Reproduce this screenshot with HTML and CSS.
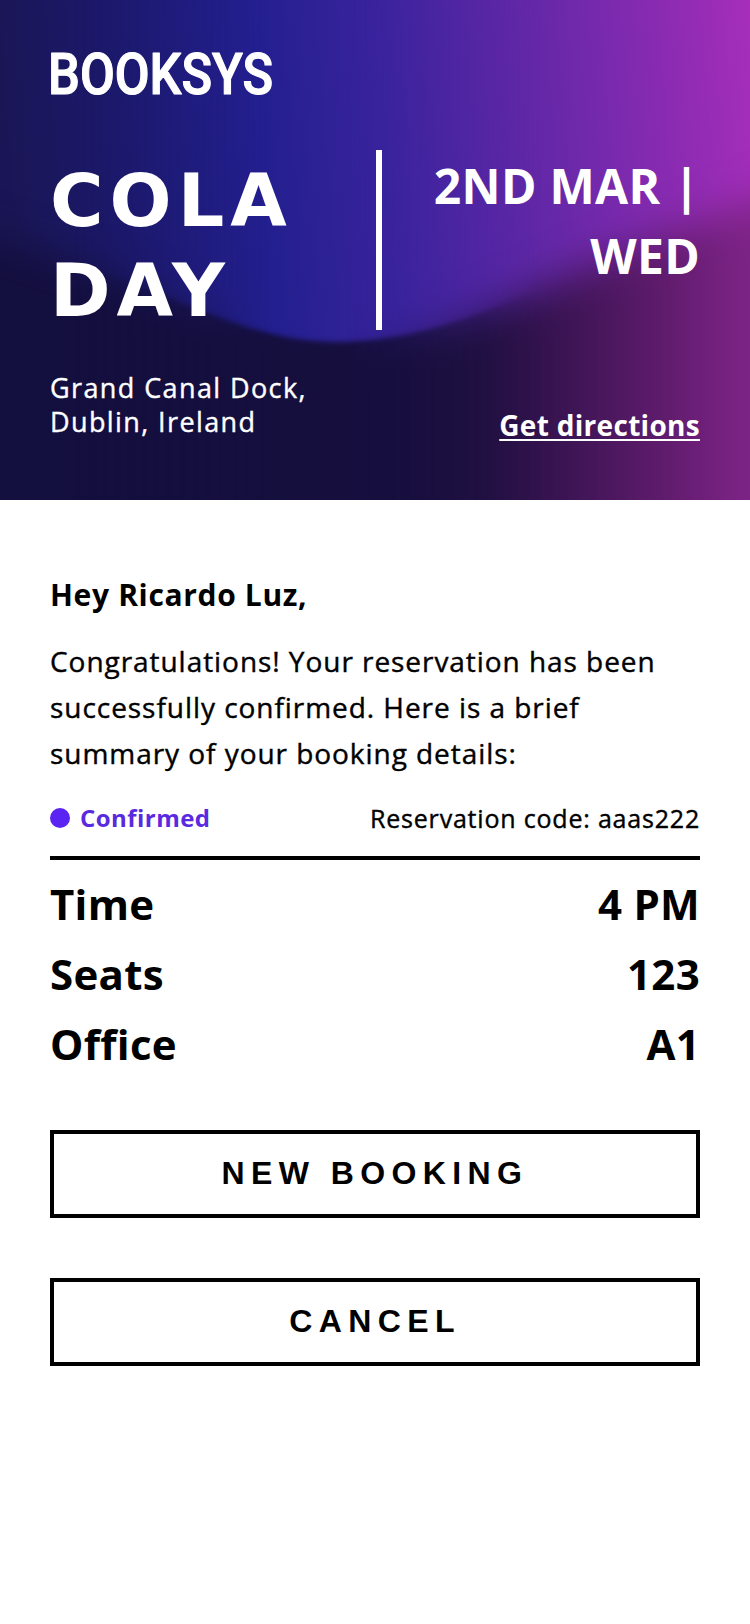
FILE: index.html
```
<!DOCTYPE html>
<html lang="en">
<head>
<meta charset="utf-8">
<title>Booksys – Reservation confirmed</title>
<link rel="stylesheet" href="styles.css">
</head>
<body>
<header class="hero">
  <svg class="hero-art" viewBox="0 0 750 500" preserveAspectRatio="none" aria-hidden="true">
    <defs>
      <linearGradient id="sky" gradientUnits="userSpaceOnUse" x1="0" y1="60" x2="750" y2="0">
        <stop offset="0" stop-color="#1a1656"/>
        <stop offset=".15" stop-color="#1c196c"/>
        <stop offset=".34" stop-color="#231f8f"/>
        <stop offset=".5" stop-color="#39239d"/>
        <stop offset=".72" stop-color="#6628a8"/>
        <stop offset=".88" stop-color="#8a2bb2"/>
        <stop offset="1" stop-color="#a62eba"/>
      </linearGradient>
      <linearGradient id="ground" gradientUnits="userSpaceOnUse" x1="0" y1="0" x2="750" y2="0">
        <stop offset="0" stop-color="#130f3e"/>
        <stop offset=".52" stop-color="#160f3e"/>
        <stop offset=".64" stop-color="#1f1040"/>
        <stop offset=".73" stop-color="#35134f"/>
        <stop offset=".88" stop-color="#5e1b6b"/>
        <stop offset="1" stop-color="#7f2488"/>
      </linearGradient>
      <linearGradient id="focus" gradientUnits="userSpaceOnUse" x1="0" y1="0" x2="750" y2="0">
        <stop offset=".1" stop-color="#000"/>
        <stop offset=".36" stop-color="#fff"/>
        <stop offset=".46" stop-color="#fff"/>
        <stop offset=".72" stop-color="#000"/>
      </linearGradient>
      <mask id="focusMask" maskUnits="userSpaceOnUse" x="0" y="0" width="750" height="500">
        <rect width="750" height="500" fill="url(#focus)"/>
      </mask>
      <filter id="soft" color-interpolation-filters="sRGB" filterUnits="userSpaceOnUse" x="-100" y="-100" width="950" height="800"><feGaussianBlur stdDeviation="20"/></filter>
      <filter id="crisp" color-interpolation-filters="sRGB" filterUnits="userSpaceOnUse" x="-100" y="-100" width="950" height="800"><feGaussianBlur stdDeviation="2.5"/></filter>
      <path id="hill" d="M-100 210 C0 242 60 260 130 283 C210 312 265 342 335 342 C430 342 510 302 590 266 C650 240 700 222 850 165 V700 H-100Z"/>
    </defs>
    <rect width="750" height="500" fill="url(#sky)"/>
    <use href="#hill" fill="url(#ground)" filter="url(#soft)"/>
    <g mask="url(#focusMask)">
      <rect width="750" height="500" fill="url(#sky)"/>
      <use href="#hill" fill="url(#ground)" filter="url(#crisp)"/>
    </g>
  </svg>
  <div class="hero-body">
    <svg class="logo" viewBox="0 0 224 50" role="img" aria-label="Booksys">
      <text class="logo-text" x="-2" y="46" textLength="225" lengthAdjust="spacingAndGlyphs">BOOKSYS</text>
    </svg>
    <div class="event">
      <h1 class="event-name">COLA<br>DAY</h1>
      <div class="event-divider"></div>
      <p class="event-date">2ND MAR |<br>WED</p>
    </div>
    <div class="place">
      <p class="address">Grand Canal Dock,<br>Dublin, Ireland</p>
      <a class="directions" href="#">Get directions</a>
    </div>
  </div>
</header>
<main class="content">
  <h2 class="greeting">Hey Ricardo Luz,</h2>
  <p class="message">Congratulations! Your reservation has been<br>successfully confirmed. Here is a brief<br>summary of your booking details:</p>
  <div class="status">
    <span class="status-dot"></span>
    <span class="status-label">Confirmed</span>
    <span class="status-code">Reservation code: aaas222</span>
  </div>
  <dl class="details">
    <div class="row"><dt>Time</dt><dd>4 PM</dd></div>
    <div class="row"><dt>Seats</dt><dd>123</dd></div>
    <div class="row"><dt>Office</dt><dd>A1</dd></div>
  </dl>
  <div class="actions">
    <button class="button">NEW BOOKING</button>
    <button class="button">CANCEL</button>
  </div>
</main>
</body>
</html>
```
FILE: styles.css
```
* { box-sizing: border-box; margin: 0; padding: 0; }
body {
  background: #fff;
  color: #000;
  font-family: "Open Sans", "Noto Sans", sans-serif;
  min-height: 1624px;
}
.hero { position: relative; height: 500px; color: #fff; overflow: hidden; }
.hero-art { position: absolute; inset: 0; width: 100%; height: 100%; }
.hero-body { position: relative; padding: 48px 50px 0; }
.logo { display: block; width: 224px; height: 50px; overflow: visible; }
.logo-text {
  font-family: Roboto, sans-serif;
  font-weight: 500;
  font-size: 58px;
  fill: #fff;
  stroke: #fff;
  stroke-width: 1.2;
  stroke-linejoin: round;
}
.event { display: flex; margin-top: 52px; height: 180px; }
.event-name {
  width: 326px;
  padding-top: 6px;
  font: bold 73px/90px "DejaVu Sans", sans-serif;
  letter-spacing: 6px;
}
.event-divider { width: 6px; height: 180px; background: #fff; }
.event-date {
  flex: 1;
  padding-top: 1px;
  font-size: 48px;
  font-weight: 700;
  line-height: 70px;
  letter-spacing: .3px;
  text-align: right;
  white-space: nowrap;
}
.place { display: flex; justify-content: space-between; padding-top: 40px; font-size: 28px; line-height: 34px; }
.address { padding-top: 1px; font-size: 27px; letter-spacing: 1.4px; -webkit-text-stroke: .4px currentColor; }
.directions {
  padding-top: 38px;
  color: #fff;
  font-weight: 700;
  letter-spacing: .3px;
  text-decoration: underline;
  text-decoration-thickness: 2px;
  text-underline-offset: 3px;
  text-decoration-skip-ink: none;
}
.content { padding: 75px 50px 0; }
.greeting { font-size: 30px; line-height: 40px; font-weight: 700; letter-spacing: .65px; }
.message {
  margin-top: 23px;
  font-size: 28px;
  line-height: 46px;
  letter-spacing: .95px;
  white-space: nowrap;
  -webkit-text-stroke: .4px currentColor;
}
.status {
  display: flex;
  align-items: center;
  height: 84px;
  padding-top: 4px;
  border-bottom: 4px solid #000;
  font-size: 24px;
  line-height: 32px;
}
.status-dot { width: 20px; height: 20px; border-radius: 50%; background: #5a24f2; }
.status-label { margin-left: 10px; color: #5a2ae0; font-weight: 700; letter-spacing: .45px; }
.status-code {
  margin-left: auto;
  font-size: 25px;
  letter-spacing: .8px;
  -webkit-text-stroke: .4px currentColor;
}
.details { padding-top: 9px; font-size: 42px; line-height: 70px; font-weight: 700; letter-spacing: .3px; }
.row { display: flex; justify-content: space-between; }
.actions { display: flex; flex-direction: column; gap: 60px; margin-top: 51px; }
.button {
  height: 88px;
  padding-bottom: 2px;
  border: 4px solid #000;
  background: #fff;
  color: #000;
  font: bold 32px "Liberation Sans", Arial, sans-serif;
  letter-spacing: 6.4px;
}
```
